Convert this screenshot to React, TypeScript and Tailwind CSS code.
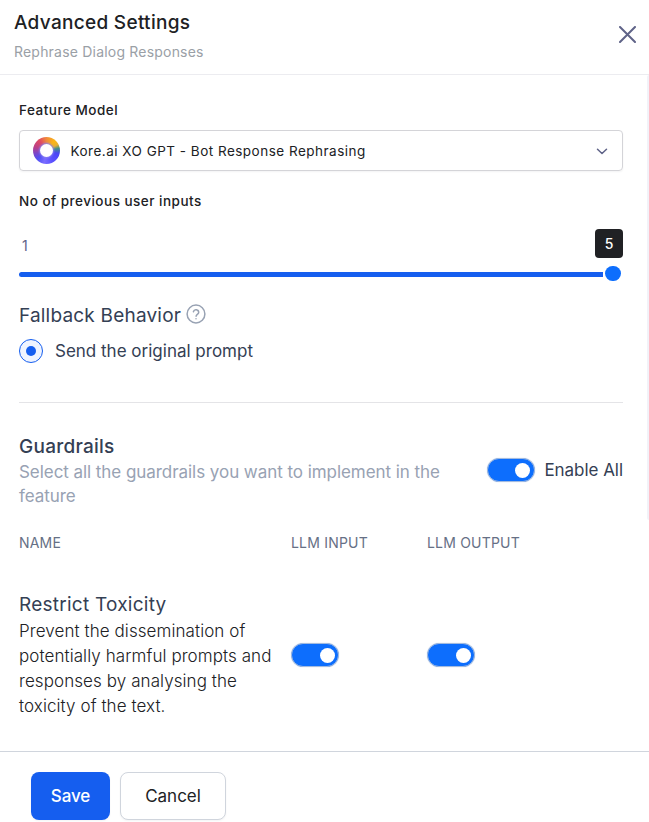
import React from "react";

function Toggle() {
  return (
    <span className="flex h-6 w-12 shrink-0 items-center justify-end rounded-full border border-[#a3bbdf] bg-[#0d6efd] pr-[3.5px] shadow-[0_0_1px_0_#a3bbdf]">
      <span className="h-[15px] w-[15px] rounded-full bg-white" />
    </span>
  );
}

function KoreLogo() {
  return (
    <span className="flex h-[27px] w-[27px] items-center justify-center rounded-full bg-[conic-gradient(from_0deg,#f08a3c_0deg,#fbb616_40deg,#e8b030_62deg,#3f8f8a_80deg,#4a45f5_105deg,#5a50ff_150deg,#7a6cff_190deg,#5050f5_225deg,#7b45c8_255deg,#b8408a_285deg,#e04a62_325deg,#f08a3c_360deg)]">
      <span className="h-[13px] w-[13px] rounded-full bg-white shadow-[0_0_2px_1px_#8a7ff0]" />
    </span>
  );
}

export default function App() {
  return (
    <div className="flex h-[822px] w-[649px] flex-col overflow-hidden bg-white font-['Inter',sans-serif]">
      <header className="flex h-[75px] shrink-0 justify-between border-b border-[#ececf0] pl-[14px] pr-[13px]">
        <div className="pt-[10px]">
          <h1 className="h-6 whitespace-nowrap text-[19px] leading-[25px] font-medium tracking-[0.3px] text-[#202124]">Advanced Settings</h1>
          <p className="mt-[8px] whitespace-nowrap text-[14px] leading-5 tracking-[0.2px] text-[#9aa0a6]">Rephrase Dialog Responses</p>
        </div>
        <svg className="mt-[26px] h-[17px] w-[17px]" viewBox="0 0 17 17" fill="none" stroke="#5f6388" strokeWidth="2" strokeLinecap="round">
          <path d="M1 1 16 16M16 1 1 16" />
        </svg>
      </header>

      <div className="flex h-[676px] shrink-0">
        <main className="w-[630px] pl-[19px] pr-[7px]">
          <label className="mt-[25px] block h-5 text-[13.5px] leading-5 font-medium tracking-[0.5px] text-[#202124]">Feature Model</label>
          <div className="mt-[10px] flex h-[41px] items-center rounded-[4px] border border-[#d4d4d8] pl-[13px] pr-[14px] shadow-[0_1px_2px_rgba(16,24,40,0.05)]">
            <KoreLogo />
            <span className="ml-[10.5px] flex-1 whitespace-nowrap text-[13.5px] leading-5 tracking-[0.49px] text-[#202124]">Kore.ai XO GPT - Bot Response Rephrasing</span>
            <svg className="mt-[2px] h-[7px] w-[12px]" viewBox="0 0 12 7" fill="none" stroke="#5f6388" strokeWidth="1.5" strokeLinecap="round" strokeLinejoin="round">
              <path d="M1.5 1.2 6 5.5 10.500 1.2" />
            </svg>
          </div>
          <label className="mt-[20px] block h-5 text-[13.5px] leading-5 font-medium tracking-[0.49px] text-[#202124]">No of previous user inputs</label>
          <div className="mt-[18px] flex h-[29px] justify-between">
            <span className="pl-[3px] pt-[7px] text-[14px] leading-5 text-[#5f6388]">1</span>
            <span className="flex h-[29px] w-7 items-center justify-center rounded-[4px] bg-[#202124] text-[14px] font-medium text-white">5</span>
          </div>
          <div className="mt-[8px] flex h-[15px] items-center">
            <span className="mt-[2px] h-[5px] w-[584px] rounded-l-[3px] bg-[#155eef]" />
            <span className="ml-[2px] h-[15px] w-4 rounded-full bg-[#0d6efd]" />
          </div>
          <div className="mt-[22px] flex h-6 items-center">
            <h2 className="mt-[2px] whitespace-nowrap text-[19px] leading-6 tracking-[0.2px] text-[#344054]">Fallback Behavior</h2>
            <svg className="ml-[4.5px] -mt-[3px] h-5 w-5" viewBox="0 0 20 20" fill="none" stroke="#98a2b3" strokeWidth="1.5" strokeLinecap="round" strokeLinejoin="round">
              <circle cx="10" cy="10" r="8.900" />
              <path d="M7.400 7.800a2.700 2.700 0 0 1 5.300.8c0 1.700-2.600 2-2.600 3.600M10 14.700v.1" />
            </svg>
          </div>
          <div className="mt-[12px] flex h-6 items-center">
            <span className="flex h-6 w-6 items-center justify-center rounded-full border border-[#155eef] bg-[#eff4ff]">
              <span className="h-[10px] w-[10px] rounded-full bg-[#155eef]" />
            </span>
            <span className="ml-3 whitespace-nowrap text-[17px] leading-6 text-[#344054]">Send the original prompt</span>
          </div>
          <div className="mt-[39px] h-px bg-[#e4e4e7]" />
          <div className="mt-[32px] flex h-[73px]">
            <div className="w-[468px]">
              <h2 className="h-6 text-[19px] leading-6 font-medium tracking-[0.25px] text-[#344054]">Guardrails</h2>
              <p className="mt-[1px] whitespace-nowrap text-[17px] leading-6 tracking-[-0.055px] text-[#98a2b3]">Select all the guardrails you want to implement in the<br />feature</p>
            </div>
            <div className="mt-[23px] flex h-6 items-center">
              <Toggle />
              <span className="ml-[9.5px] whitespace-nowrap text-[17px] leading-6 tracking-[-0.04px] text-[#344054]">Enable All</span>
            </div>
          </div>
          <div className="mt-[25px] flex h-5 text-[14px] leading-5 tracking-[0.2px] text-[#667085]">
            <span className="w-[272px]">NAME</span>
            <span className="w-[136px]">LLM INPUT</span>
            <span>LLM OUTPUT</span>
          </div>
          <div className="mt-[40px] flex">
            <div className="w-[272px]">
              <h3 className="h-6 whitespace-nowrap text-[19px] leading-6 tracking-[0.25px] text-[#344054]">Restrict Toxicity</h3>
              <p className="mt-[2px] whitespace-nowrap text-[17px] leading-[25px] font-light tracking-[0.08px] text-[#202124]">Prevent the dissemination of<br />potentially harmful prompts and<br />responses by analysing the<br />toxicity of the text.</p>
            </div>
            <div className="mt-[50px] flex w-[136px]"><Toggle /></div>
            <div className="mt-[50px]"><Toggle /></div>
          </div>
        </main>
        <div className="ml-[17px] h-[445px] w-[2px] rounded-l-[2px] bg-[#f2f2f8]" />
      </div>

      <footer className="flex h-[71px] shrink-0 gap-[10px] border-t border-[#d0d5dd] pl-[31px] pt-[20px]">
        <button className="h-12 w-[79px] rounded-[8px] bg-[#155eef] pt-[2px] text-[17px] font-medium tracking-[-0.1px] text-white shadow-[0_1px_2px_rgba(16,24,40,0.05)]">Save</button>
        <button className="h-12 w-[106px] rounded-[8px] border border-[#d0d5dd] bg-white pt-[2px] text-[17px] text-[#202124] shadow-[0_1px_2px_rgba(16,24,40,0.05)]">Cancel</button>
      </footer>
    </div>
  );
}
